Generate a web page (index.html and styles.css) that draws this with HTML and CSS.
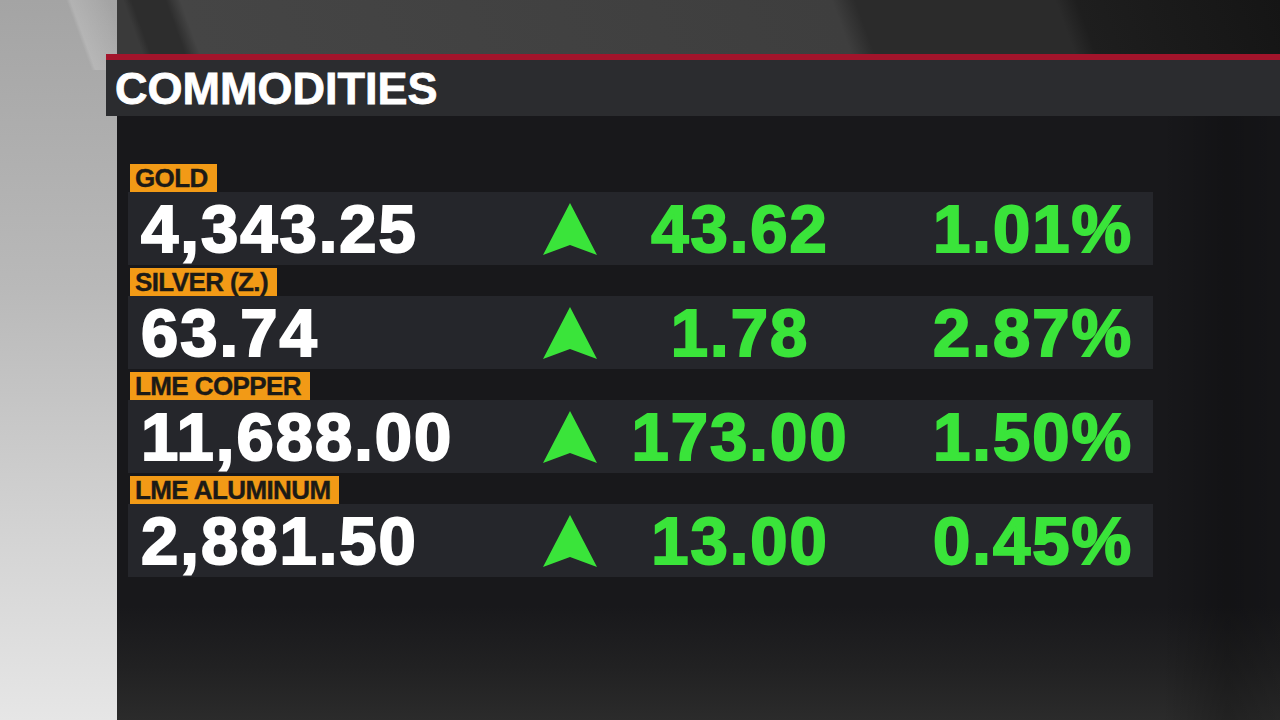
FILE: index.html
```html
<!DOCTYPE html>
<html lang="en">
<head>
    <meta charset="UTF-8">
    <title>Commodities</title>
    <link rel="stylesheet" href="styles.css">
</head>
<body>
    <div class="screen">
        <div class="backdrop-top"></div>

        <header class="title-bar">
            <h1>COMMODITIES</h1>
        </header>

        <main class="board">
            <!-- GOLD -->
            <section class="quote">
                <div class="tag">GOLD</div>
                <div class="quote-row">
                    <span class="price">4,343.25</span>
                    <svg class="arrow" viewBox="0 0 54 52" width="54" height="52"><polygon points="27,0 54,52 27,42 0,52"/></svg>
                    <span class="change">43.62</span>
                    <span class="pct">1.01%</span>
                </div>
            </section>

            <!-- SILVER -->
            <section class="quote">
                <div class="tag">SILVER (Z.)</div>
                <div class="quote-row">
                    <span class="price">63.74</span>
                    <svg class="arrow" viewBox="0 0 54 52" width="54" height="52"><polygon points="27,0 54,52 27,42 0,52"/></svg>
                    <span class="change">1.78</span>
                    <span class="pct">2.87%</span>
                </div>
            </section>

            <!-- COPPER -->
            <section class="quote">
                <div class="tag">LME COPPER</div>
                <div class="quote-row">
                    <span class="price">11,688.00</span>
                    <svg class="arrow" viewBox="0 0 54 52" width="54" height="52"><polygon points="27,0 54,52 27,42 0,52"/></svg>
                    <span class="change">173.00</span>
                    <span class="pct">1.50%</span>
                </div>
            </section>

            <!-- ALUMINUM -->
            <section class="quote">
                <div class="tag">LME ALUMINUM</div>
                <div class="quote-row">
                    <span class="price">2,881.50</span>
                    <svg class="arrow" viewBox="0 0 54 52" width="54" height="52"><polygon points="27,0 54,52 27,42 0,52"/></svg>
                    <span class="change">13.00</span>
                    <span class="pct">0.45%</span>
                </div>
            </section>
        </main>
    </div>
</body>
</html>
```

FILE: styles.css
```css
* {
    box-sizing: border-box;
}
body {
    margin: 0;
    width: 1280px;
    height: 720px;
    overflow: hidden;
    font-family: "Liberation Sans", Arial, sans-serif;
    background:
        linear-gradient(70deg, transparent 0 86px, rgba(255,255,255,0.16) 90px, rgba(255,255,255,0.05) 116px, transparent 126px) 0 0 / 117px 70px no-repeat,
        linear-gradient(to bottom, #a4a4a4 0%, #b9b9b9 40%, #d4d4d4 75%, #e6e6e6 100%);
}
.screen {
    margin-left: 117px;
    height: 720px;
    display: flex;
    flex-direction: column;
}
.backdrop-top {
    height: 54px;
    background: linear-gradient(70deg, #3a3a3a 0 24px, #2d2d2d 32px 64px, #454545 78px, #3e3e3e 690px, #2b2b2b 712px 900px, #1e1e1e 920px, #151515 1111px);
}
.title-bar {
    margin-left: -11px;
    height: 62px;
    border-top: 6px solid #a3142b;
    background: #2b2c2f;
    display: flex;
    align-items: center;
    padding-left: 9px;
}
.title-bar h1 {
    margin: 0;
    font-size: 45px;
    line-height: 1;
    font-weight: bold;
    color: #fff;
    letter-spacing: 0;
    -webkit-text-stroke: 0.8px #fff;
}
.board {
    flex: 1;
    padding: 48px 127px 0 11px;
    background:
        linear-gradient(to right, transparent 1045px, rgba(0,0,0,0.22) 1110px, rgba(0,0,0,0.12) 1163px),
        linear-gradient(to bottom, #18181b 0, #18181b 490px, #212122 550px, #2b2b2b 604px);
}
.quote {
    margin-bottom: 3px;
}
.tag {
    display: inline-block;
    vertical-align: top;
    height: 28px;
    line-height: 28px;
    margin-left: 2px;
    padding: 0 9px 0 5px;
    background: #f29a16;
    color: #1c1a16;
    font-size: 26px;
    font-weight: bold;
    letter-spacing: -0.6px;
    -webkit-text-stroke: 0.4px #1c1a16;
}
.quote-row {
    display: grid;
    grid-template-columns: 402px 54px 286px 1fr;
    align-items: center;
    height: 73px;
    padding: 0 20px 0 13px;
    background: #25262b;
}
.price,
.change,
.pct {
    font-size: 67px;
    font-weight: bold;
    line-height: 1;
    letter-spacing: 2px;
    white-space: nowrap;
    -webkit-text-stroke: 2px currentColor;
}
.price {
    color: #fff;
}
.arrow {
    display: block;
    fill: #3ae43a;
}
.change {
    color: #3ae43a;
    text-align: center;
}
.pct {
    color: #3ae43a;
    text-align: right;
}
```
